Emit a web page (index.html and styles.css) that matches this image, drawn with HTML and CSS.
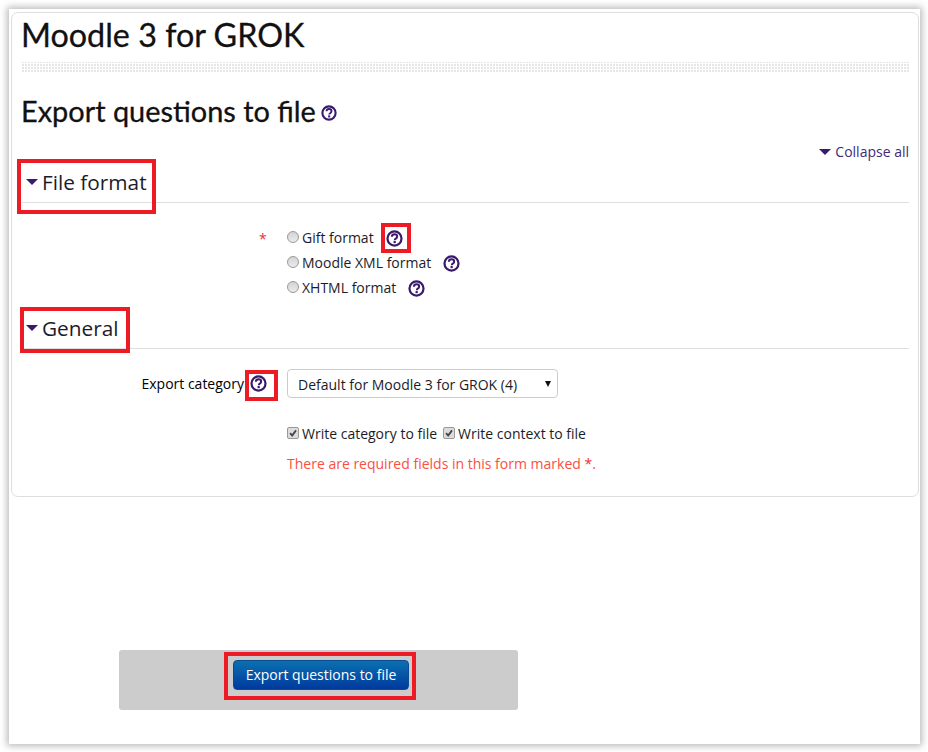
FILE: index.html
```html
<!DOCTYPE html>
<html lang="en">
<head>
<meta charset="utf-8">
<title>Export questions to file</title>
<link rel="stylesheet" href="styles.css">
</head>
<body>
<svg class="defs" width="0" height="0" aria-hidden="true">
  <symbol id="help" viewBox="0 0 16 16">
    <circle cx="8" cy="8" r="6.6" fill="#fff" stroke="#3a1a6e" stroke-width="2.1"/>
    <path d="M5.5 6.3C5.6 4.8 6.7 4 8 4c1.5 0 2.5.9 2.5 2.1 0 1-.6 1.6-1.3 2.1-.6.4-.9.7-.9 1.4" fill="none" stroke="#3a1a6e" stroke-width="1.9"/>
    <rect x="7.1" y="10.4" width="2.1" height="2" fill="#3a1a6e"/>
  </symbol>
</svg>
<div class="frame">
  <main class="card">
    <h1 class="site-title">Moodle 3 for GROK</h1>
    <div class="dots"></div>
    <h2 class="page-title">Export questions to file<svg class="help help-title"><use href="#help"/></svg></h2>
    <div class="collapse-row"><a class="collapse"><span class="caret caret-small"></span>Collapse all</a></div>

    <section class="section">
      <h3 class="legend"><span class="caret"></span>File format</h3>
      <div class="form-row format-row">
        <div class="label-col"><span class="req">*</span></div>
        <div class="control-col radios">
          <label class="radio gift"><span class="radio-dot"></span>Gift format<svg class="help help-gift"><use href="#help"/></svg></label>
          <label class="radio"><span class="radio-dot"></span>Moodle XML format<svg class="help help-gift"><use href="#help"/></svg></label>
          <label class="radio"><span class="radio-dot"></span>XHTML format<svg class="help help-gift"><use href="#help"/></svg></label>
        </div>
      </div>
    </section>

    <section class="section section-general">
      <h3 class="legend"><span class="caret"></span>General</h3>
      <div class="form-row category-row">
        <div class="label-col label-text">Export category<svg class="help help-cat"><use href="#help"/></svg></div>
        <div class="control-col">
          <div class="select">Default for Moodle 3 for GROK (4)<span class="select-arrow"></span></div>
        </div>
      </div>
      <div class="form-row checks-row">
        <div class="label-col"></div>
        <div class="control-col checks">
          <label class="check"><span class="check-box"><svg viewBox="0 0 12 12"><path d="M2.5 6.2 5 9l4.6-6.2" fill="none" stroke="#444" stroke-width="2.2"/></svg></span>Write category to file</label>
          <label class="check"><span class="check-box"><svg viewBox="0 0 12 12"><path d="M2.5 6.2 5 9l4.6-6.2" fill="none" stroke="#444" stroke-width="2.2"/></svg></span>Write context to file</label>
        </div>
      </div>
      <div class="form-row note-row">
        <div class="label-col"></div>
        <div class="control-col note">There are required fields in this form marked <span class="note-star">*</span>.</div>
      </div>
    </section>
  </main>

  <div class="actions">
    <button class="primary" type="button">Export questions to file</button>
  </div>

  <span class="mark mark-file"></span>
  <span class="mark mark-gift"></span>
  <span class="mark mark-general"></span>
  <span class="mark mark-cat"></span>
  <span class="mark mark-btn"></span>
</div>
</body>
</html>
```

FILE: styles.css
```css
* { box-sizing: border-box; }
html, body { margin: 0; padding: 0; background: #fff; }
body {
  width: 928px;
  height: 752px;
  overflow: hidden;
  font-family: "Open Sans", sans-serif;
  font-size: 14px;
  color: #1c1c28;
  padding: 9px 8px 8px 9px;
}
.defs { position: absolute; }
.frame {
  position: absolute;
  left: 9px;
  top: 9px;
  width: 911px;
  height: 735px;
  background: #fff;
  box-shadow: 0 0 7px 2px rgba(0, 0, 0, .28);
  padding: 3px 1px 0 2px;
}
.card {
  height: 485px;
  border: 1px solid #dedede;
  border-radius: 7px;
  padding: 0 9px 0 10px;
}
.site-title {
  margin: 0 0 0 -1px;
  padding-top: 1px;
  font-family: "Lato", sans-serif;
  font-size: 32.3px;
  line-height: 42px;
  font-weight: 400;
  color: #111;
  height: 49px;
  -webkit-text-stroke: .3px #111;
}
.dots {
  height: 10px;
  background:
    repeating-linear-gradient(90deg, transparent 0 2px, #fff 2px 3px),
    repeating-linear-gradient(0deg, transparent 0 2px, #fff 2px 3px),
    #e6e6e6;
}
.page-title {
  margin: 19px 0 0 -1px;
  height: 40px;
  font-family: "Lato", sans-serif;
  font-size: 28.9px;
  line-height: 40px;
  font-weight: 400;
  color: #111;
  display: flex;
  align-items: center;
  -webkit-text-stroke: .3px #111;
}
.help { display: block; flex: none; }
.help-title { width: 16px; height: 16px; margin: 4px 0 0 5px; }
.help-gift { width: 17px; height: 17px; margin: 1px 0 0 12px; }
.help-cat { width: 17px; height: 17px; margin-left: 6px; }
.collapse-row {
  margin-top: 11px;
  display: flex;
  justify-content: flex-end;
  height: 20px;
}
.collapse {
  display: flex;
  align-items: center;
  font-size: 14px;
  line-height: 20px;
  color: #3f2a78;
}
.caret {
  display: inline-block;
  width: 0;
  height: 0;
  border-left: 6px solid transparent;
  border-right: 6px solid transparent;
  border-top: 6px solid #3a1a6e;
  margin: 0 4px 0 4px;
}
.caret-small { margin: 0 4px 0 0; }
.section { position: relative; }
.legend {
  margin: 0;
  height: 41px;
  display: flex;
  align-items: center;
  font-size: 20.8px;
  font-weight: 400;
  color: #1c1c28;
  border-bottom: 1px solid #dedede;
  line-height: 38px;
}
.form-row { display: flex; }
.label-col {
  width: 245px;
  flex: none;
  display: flex;
  justify-content: flex-end;
  align-items: center;
}
.control-col { margin-left: 20px; }
.format-row { padding-top: 22px; }
.format-row .label-col { align-items: flex-start; height: 25px; padding-right: 4px; }
.req { color: #e8303a; font-size: 14px; line-height: 25px; width: 4px; padding-top: 1px; }
.radios { display: flex; flex-direction: column; }
.radio { display: flex; align-items: center; height: 25px; }
.radio-dot {
  width: 12px;
  height: 12px;
  border-radius: 50%;
  border: 1px solid #999;
  background: linear-gradient(#d4d4d4, #ebebeb);
  margin-right: 3px;
  flex: none;
  position: relative;
  top: -1px;
}
.section-general { margin-top: 8px; }
.category-row { padding-top: 20px; align-items: center; }
.label-text { color: #000; height: 29px; font-size: 14px; font-weight: 400; }
.select {
  position: relative;
  width: 271px;
  height: 29px;
  border: 1px solid #ccc;
  border-radius: 4px;
  padding: 0 10px;
  line-height: 29px;
  font-size: 14px;
  background: #fff;
}
.select-arrow {
  position: absolute;
  right: 6px;
  top: 11px;
  width: 0;
  height: 0;
  border-left: 3px solid transparent;
  border-right: 3px solid transparent;
  border-top: 6px solid #111;
}
.checks-row { padding-top: 25px; }
.checks { display: flex; gap: 6px; height: 20px; }
.check { display: flex; align-items: center; }
.check-box {
  width: 12px;
  height: 12px;
  border: 1px solid #999;
  border-radius: 2px;
  background: #dcdcdc;
  margin-right: 3px;
  display: block;
}
.check-box svg { display: block; width: 10px; height: 10px; }
.note-row { padding-top: 11px; }
.note { color: #f9503f; line-height: 20px; }
.note-star { color: #e8303a; }
.actions {
  position: absolute;
  left: 110px;
  top: 641px;
  width: 399px;
  height: 60px;
  background: #ccc;
  border-radius: 3px;
  display: flex;
  justify-content: center;
  align-items: center;
  padding: 0 0 10px 4px;
}
.primary {
  width: 176px;
  height: 30px;
  border: 1px solid #0a4c8f;
  border-radius: 4px;
  background: linear-gradient(#0a70b0, #003a9e);
  color: #fff;
  font-family: "Open Sans", sans-serif;
  font-size: 14px;
  padding: 0 0 2px 1px;
}
.mark { position: absolute; border: 4px solid #ed1c24; }
.mark-file { left: 8px; top: 150px; width: 139px; height: 55px; }
.mark-gift { left: 372px; top: 214px; width: 30px; height: 30px; }
.mark-general { left: 11px; top: 298px; width: 110px; height: 46px; }
.mark-cat { left: 236px; top: 361px; width: 33px; height: 31px; }
.mark-btn { left: 215px; top: 643px; width: 192px; height: 48px; }
```
